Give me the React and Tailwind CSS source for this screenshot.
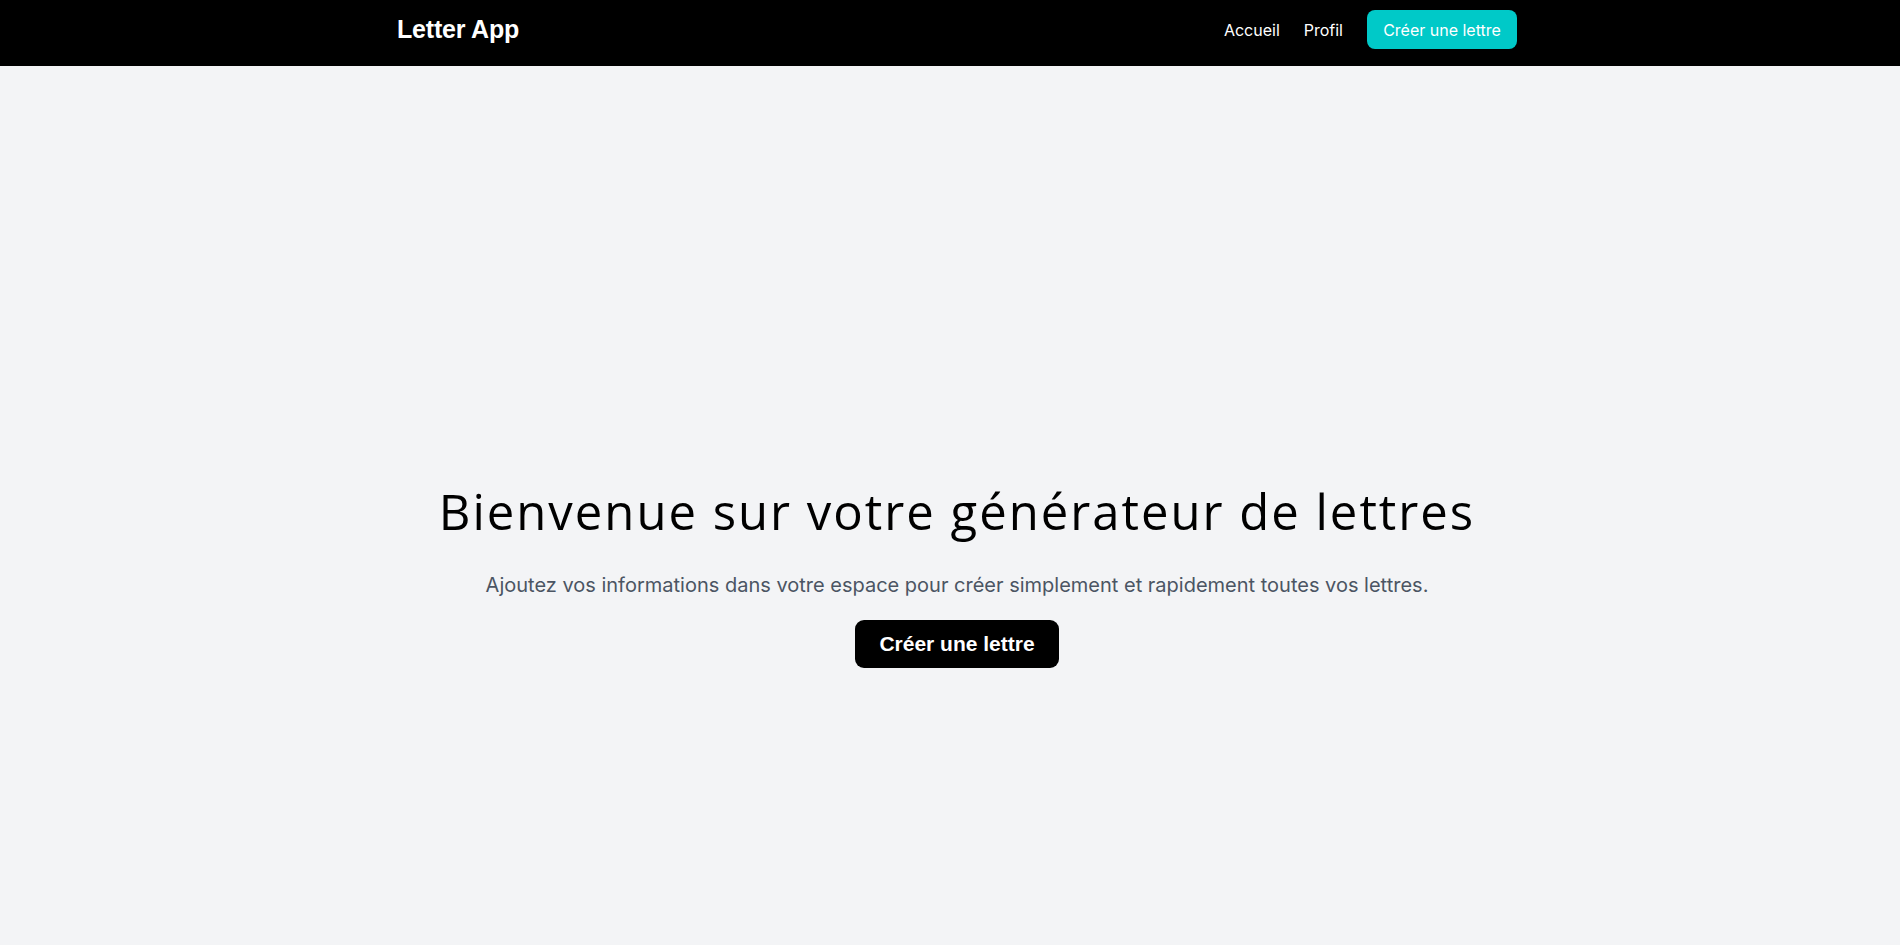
export default function App() {
  return (
    <div className="min-h-screen w-full bg-[#f3f4f6] font-['Inter',sans-serif]">
      {/* Navbar */}
      <nav className="w-full bg-black pt-[10px] pb-[17px]">
        <div className="mx-auto flex max-w-[1134px] items-center justify-between pl-[14px]">
          <a href="#" className="mt-px text-[25px] font-semibold tracking-[-0.2px] text-white font-['Liberation_Sans',sans-serif]">
            Letter App
          </a>
          <div className="flex items-center gap-6">
            <a href="#" className="mt-px text-base text-white">Accueil</a>
            <a href="#" className="mt-px text-base text-white">Profil</a>
            <a
              href="#"
              className="flex h-[39px] w-[150px] items-center justify-center rounded-lg bg-[#00c9c8] pt-px text-base text-white"
            >
              Créer une lettre
            </a>
          </div>
        </div>
      </nav>

      {/* Hero */}
      <main className="flex flex-col items-center pt-[421px] pl-[14px] text-center">
        <h1 className="text-[49px] font-normal leading-none tracking-[2px] text-black font-['Open_Sans',sans-serif]">
          Bienvenue sur votre générateur de lettres
        </h1>
        <p className="mt-[35px] text-xl text-[#4b5563]">
          Ajoutez vos informations dans votre espace pour créer simplement et rapidement toutes vos lettres.
        </p>
        <a
          href="#"
          className="mt-[21px] flex h-12 items-center rounded-[9px] bg-black px-6 text-[21px] font-bold text-white font-['Liberation_Sans',sans-serif]"
        >
          Créer une lettre
        </a>
      </main>
    </div>
  );
}
